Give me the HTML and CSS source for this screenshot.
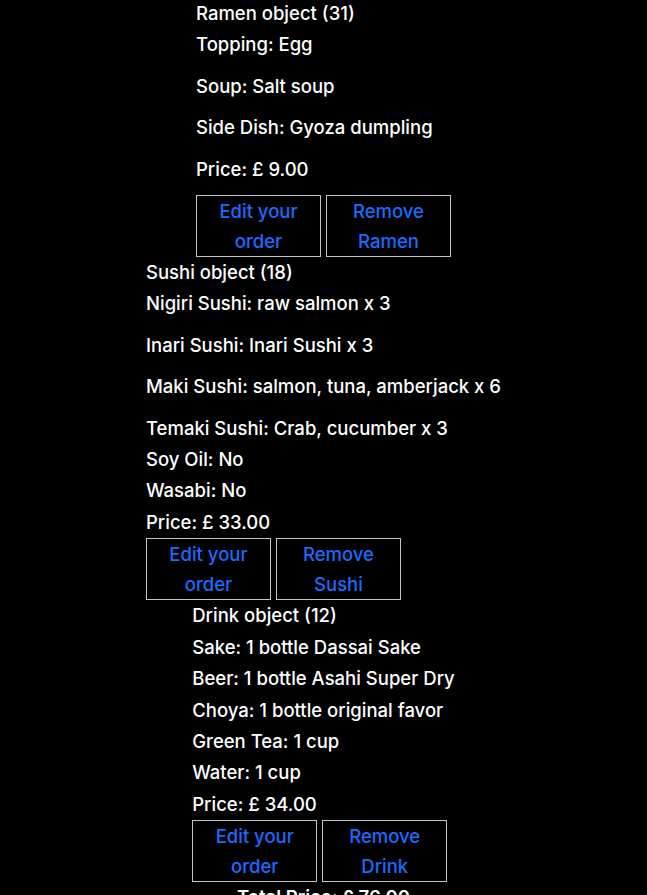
FILE: index.html
```html
<!DOCTYPE html>
<html>
<head>
<meta charset="utf-8">
<link rel="stylesheet" href="styles.css">
</head>
<body>
<main class="orders">
  <section class="order">
    <div class="line">Ramen object (31)</div>
    <p class="line spaced">Topping: Egg</p>
    <p class="line spaced">Soup: Salt soup</p>
    <p class="line spaced">Side Dish: Gyoza dumpling</p>
    <p class="line spaced">Price: £ 9.00</p>
    <div class="actions">
      <button class="btn">Edit your order</button>
      <button class="btn">Remove Ramen</button>
    </div>
  </section>
  <section class="order">
    <div class="line">Sushi object (18)</div>
    <p class="line spaced">Nigiri Sushi: raw salmon x 3</p>
    <p class="line spaced">Inari Sushi: Inari Sushi x 3</p>
    <p class="line spaced">Maki Sushi: salmon, tuna, amberjack x 6</p>
    <p class="line">Temaki Sushi: Crab, cucumber x 3</p>
    <div class="line">Soy Oil: No</div>
    <div class="line">Wasabi: No</div>
    <div class="line">Price: £ 33.00</div>
    <div class="actions">
      <button class="btn">Edit your order</button>
      <button class="btn">Remove Sushi</button>
    </div>
  </section>
  <section class="order">
    <div class="line">Drink object (12)</div>
    <div class="line">Sake: 1 bottle Dassai Sake</div>
    <div class="line">Beer: 1 bottle Asahi Super Dry</div>
    <div class="line">Choya: 1 bottle original favor</div>
    <div class="line">Green Tea: 1 cup</div>
    <div class="line">Water: 1 cup</div>
    <div class="line">Price: £ 34.00</div>
    <div class="actions">
      <button class="btn">Edit your order</button>
      <button class="btn">Remove Drink</button>
    </div>
  </section>
  <div class="line total">Total Price: £ 76.00</div>
</main>
</body>
</html>
```
FILE: styles.css
```css
html, body {
  margin: 0;
  padding: 0;
  background: #000;
}
body {
  color: #fff;
  font-family: Inter, "Noto Sans", sans-serif;
  font-size: 18.5px;
  font-weight: 500;
}
.orders {
  display: flex;
  flex-direction: column;
  align-items: center;
  margin-top: -2px;
}
.order {
  width: fit-content;
  text-align: left;
}
.line {
  line-height: 31.4px;
  margin: 0;
  white-space: nowrap;
}
.spaced {
  margin-bottom: 10px;
}
.actions {
  display: flex;
  gap: 5px;
}
.btn {
  box-sizing: border-box;
  width: 125px;
  height: 62px;
  padding: 0 12px;
  margin: 0;
  background: #000;
  border: 1px solid #c4c4c4;
  color: #1a6bff;
  font-family: inherit;
  font-size: 18.5px;
  font-weight: 500;
  line-height: 30px;
  text-align: center;
}
.total {
  font-weight: 600;
}
```
